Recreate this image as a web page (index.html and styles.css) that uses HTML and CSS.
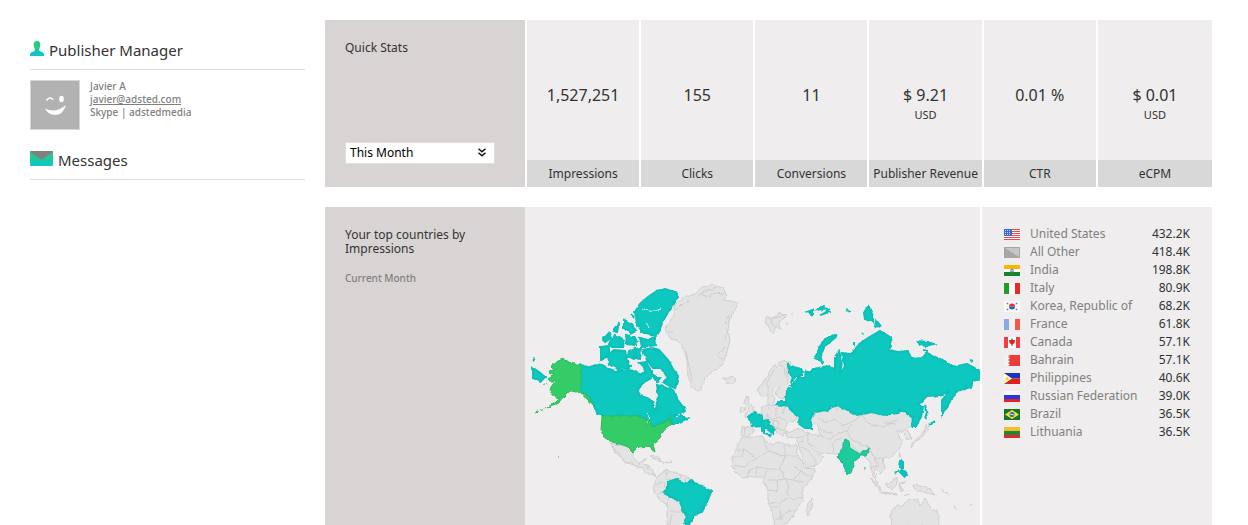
FILE: index.html
```html
<!DOCTYPE html>
<html lang="en">
<head>
<meta charset="utf-8">
<title>Publisher Dashboard</title>
<link rel="stylesheet" href="styles.css">
</head>
<body>
<div class="page">
  <aside class="sidebar">
    <h2 class="side-title">
      <svg class="icon-person" width="14" height="15" viewBox="0 0 14 15" aria-hidden="true">
        <defs><linearGradient id="brand" x1="0" y1="0" x2="0" y2="1"><stop offset="0" stop-color="#33cc66"/><stop offset="1" stop-color="#08c7cf"/></linearGradient></defs>
        <path fill="url(#brand)" d="M7 0C9.500 0 10.800 2 10.300 4.500C10 6.500 9.300 7.500 9 8.500C9 9.800 10 10.300 11.500 10.800C13.500 11.500 14 12.500 14 15H0C0 12.500 .5 11.500 2.500 10.800C4 10.300 5 9.800 5 8.500C4.700 7.500 4 6.500 3.700 4.500C3.200 2 4.500 0 7 0Z"/>
      </svg>
      <span>Publisher Manager</span>
    </h2>
    <div class="contact">
      <svg class="avatar" viewBox="0 0 50 50" role="img" aria-label="Avatar">
        <rect x=".5" y=".5" width="49" height="49" fill="#b2b2b2" stroke="#d8d4d4"/>
        <ellipse cx="31.500" cy="19" rx="2.300" ry="3.300" fill="#fff"/>
        <path d="M16.500 20.500Q20 16 23 19.800" fill="none" stroke="#fff" stroke-width="1.600"/>
        <path d="M15 28.500Q25 34 36 25Q33 35 25 35Q18 35 15 28.500Z" fill="#fff"/>
      </svg>
      <div class="contact-text">
        <div>Javier A</div>
        <div><a href="mailto:javier@adsted.com">javier@adsted.com</a></div>
        <div>Skype | adstedmedia</div>
      </div>
    </div>
    <h2 class="side-title">
      <svg class="icon-mail" width="23" height="15" viewBox="0 0 23 15" aria-hidden="true">
        <rect width="23" height="15" rx="1" fill="url(#brand)"/>
        <path d="M0 1L1 0H22L23 1L11.500 8.700Z" fill="#808080"/>
      </svg>
      <span>Messages</span>
    </h2>
  </aside>

  <main class="main">
    <section class="stats">
      <div class="stats-head">
        <label for="period">Quick Stats</label>
        <div class="select-wrap">
          <select id="period" class="period"><option>This Month</option></select>
          <svg class="chevrons" width="8" height="9" viewBox="0 0 8 9" aria-hidden="true"><path d="M.5 .8L4 3.800L7.500 .8M.5 4.800L4 7.800L7.500 4.800" fill="none" stroke="#111" stroke-width="1.500"/></svg>
        </div>
      </div>
      <div class="stat"><div class="value">1,527,251</div><div class="name">Impressions</div></div>
      <div class="stat"><div class="value">155</div><div class="name">Clicks</div></div>
      <div class="stat"><div class="value">11</div><div class="name">Conversions</div></div>
      <div class="stat"><div class="value">$ 9.21<small>USD</small></div><div class="name">Publisher Revenue</div></div>
      <div class="stat"><div class="value">0.01 %</div><div class="name">CTR</div></div>
      <div class="stat"><div class="value">$ 0.01<small>USD</small></div><div class="name">eCPM</div></div>
    </section>

    <section class="countries">
      <div class="countries-head">
        <div>Your top countries by Impressions</div>
        <div class="range">Current Month</div>
      </div>
      <svg class="map" viewBox="525 207 455 318" role="img" aria-label="World map of impressions">
        <defs>
          <filter id="coast" x="-5%" y="-5%" width="110%" height="110%" color-interpolation-filters="sRGB"><feTurbulence type="fractalNoise" baseFrequency=".2" numOctaves="1" seed="4"/><feDisplacementMap in="SourceGraphic" scale="4" xChannelSelector="R" yChannelSelector="G"/></filter>
        </defs>
        <g class="land" filter="url(#coast)">
          <path d="M693 295L702 287L713 285L723 288L727 296L723 300L731 301L738 303L735 310L730 317L728 330L730 340L727 352L723 363L715 370L705 378L700 392L693 388L688 377L687 360L682 343L670 338L665 328L673 317L675 305L683 298Z"/>
          <path d="M696 298L704 291L717 288M680 306L689 300M725 348L718 354M723 359L716 355M729 315L725 324M700 294L708 297L715 293L724 294M686 352L689 366L692 380M667 331L674 333M727 330L725 340M676 309L681 304"/>
          <path d="M723 377L727 379L731 376L736 379L733 383L727 384Z"/>
          <path d="M766 316L773 319L778 313L786 315L781 320L778 322L782 330L776 326L773 335L766 324ZM770 318L774 328M775 318L781 316M785 323L788 323M791 314L793 314"/>
          <path d="M760 395L758 388L765 380L772 367L783 360L790 363L787 366L788 380L787 395L783 399L775 394L779 386L776 382L772 393L775 399L772 407L768 406L768 394L764 397Z"/>
          <path d="M768 393L768 381L773 371L780 365L784 367L786 380"/>
          <path d="M745 416L748 408L744 402L747 396L750 402L754 410L754 415ZM740 412L741 407L745 407L744 412Z"/>
          <path d="M761 413L762 407L768 405L775 406L787 402L792 412L800 417L795 420L790 421L785 429L783 437L779 433L772 425L767 421L761 420Z"/>
          <path d="M768 407L767 415L773 419L780 418L787 421M776 406V416M761 417L768 419L779 422L777 429M785 406L783 414M773 420L774 427M784 430L776 428"/>
          <path d="M742 426L753 427L754 430L750 435L745 437L741 435ZM745 428L744 435"/>
          <path d="M785 432L800 429L808 433L808 437L797 438L787 437Z"/>
          <path d="M796 438L808 436L808 443L817 453L824 457L818 464L807 468L803 460Z"/>
          <path d="M800 446L808 450L817 463M797 443L803 440"/>
          <path d="M808 433L820 436L818 427L812 420L811 408L840 400L905 405L914 425L907 428L902 431L896 431L900 437L902 443L898 451L890 457L883 458L885 468L880 474L876 468L874 472L878 483L873 476L870 462L863 455L850 456L837 454L832 454L820 452L808 442Z"/>
          <path d="M818 418L827 423L834 419L844 425L854 421L862 415L868 423L883 428L898 419M820 436L830 439L840 433L847 431L852 424M840 400L836 410M820 429L833 434M833 453L832 443L841 438M847 431L852 440L859 443L870 448L874 459L881 458M874 459L879 466L872 467M849 443L860 453L869 449M884 423L896 424"/>
          <path d="M905 430L909 431L911 438L907 440L904 433M926 425L929 429L925 432L923 437L913 444L911 447L912 443L919 438L924 432ZM900 453L901 457L899 456Z"/>
          <path d="M742 438L753 437L763 436L765 441L773 445L778 442L787 445L796 445L798 455L805 468L815 469L812 478L803 488L803 498L797 510L790 520L782 526L775 526L772 512L768 502L768 490L763 482L763 477L755 477L742 478L737 472L732 467L732 457L737 447Z"/>
          <path d="M743 448L757 459L768 451L763 440M736 450H744L741 457H732M734 465L744 467L749 462L757 459M768 451L785 457V444M785 456H798M785 457L780 469L769 469L757 467L749 470L748 476M757 467V476M769 469L763 478M780 469L785 479L777 480L768 480M785 479L793 480L801 472L795 466M793 480L803 482M801 472L811 477M777 480L778 491L768 490M788 480L787 494L793 500L802 497M768 502L780 503L788 498M780 503V518L789 510L796 511M772 507H778M776 519H783"/>
          <path d="M813 498L812 507L808 516L806 510L808 503Z"/>
          <path d="M610 443L618 445L628 447L633 452L633 458L640 463L646 458L643 464L650 466L653 474L659 477L650 475L640 467L625 462L618 452ZM612 446L620 457L615 453Z"/>
          <path d="M650 457L657 456L663 461L654 459ZM663 462L672 461L668 463ZM640 463L637 468M645 464L649 470"/>
          <path d="M652 473L658 476L665 470L672 472L682 475L692 480L688 500L690 526H667L667 505L658 498L653 488L657 478Z"/>
          <path d="M667 472L666 479L675 480M655 486L663 482L668 489L659 494M667 505L668 495M670 511H684M672 514L669 526M680 475L679 482M686 477L685 482"/>
          <path d="M870 478L877 484L882 491L878 489ZM882 492L898 494L896 495L882 493ZM885 484L892 482L896 477L897 484L893 489L887 487ZM899 483L906 482L901 485L904 491L900 490ZM912 485L920 486L930 489L935 495L928 493L919 491L914 488ZM904 496L910 494M941 489L949 495M954 505L957 511M969 506L974 503"/>
          <path d="M890 512L897 506L903 505L907 500L912 499L918 500L920 506L925 498L930 507L938 513L939 526H892Z"/>
        </g>
        <g class="teal" filter="url(#coast)">
          <path d="M581 364L587 368L593 366L598 364L604 366L609 369L615 371L622 371L628 370L633 371L641 375L645 372L644 366L647 364L650 369L652 374L655 376L648 380L640 385L638 391L640 396L647 398L652 401L655 410L658 407L656 402L659 396L657 385L661 386L666 389L670 388L675 392L677 399L683 407L685 411L680 415L670 416L675 417L681 416L688 418L684 420L672 425L670 418L665 422L653 427L648 420L640 416H602L597 412L594 406L588 396L581 391Z"/>
          <path d="M635 312L640 304L648 297L657 291L665 289L675 292L678 297L672 307L668 313L662 322L660 330L657 335L650 334L642 332L637 323Z"/>
          <path d="M640 338L648 340L655 336L656 345L642 347Z"/>
          <path d="M624 320L632 324L636 331L630 333L624 328ZM603 340L609 333L611 338L605 342ZM613 330L619 324L617 331ZM609 344L615 335L624 341L623 347L612 347ZM626 335L634 337L636 345L627 344ZM631 314L633 318M635 338L638 342M640 333L646 333"/>
          <path d="M601 347L609 346L609 356L601 359ZM608 355L614 350L625 351L627 360L629 368L619 369L609 364ZM629 351L635 349L634 359L628 356ZM636 349L641 348L640 359L636 358ZM626 365L632 366"/>
          <path d="M643 350L651 348L659 350L668 360L673 369L678 376L675 388L668 385L663 382L668 378L661 368L653 368L647 360ZM640 363L646 362L644 367ZM654 378L660 378L657 382Z"/>
          <path d="M533 368L539 372L545 377L541 381L533 378ZM533 359L535 360"/>
          <path d="M788 365L800 369L803 373L797 377L805 377L806 371L810 373L813 369L830 366L835 370L835 357L839 351L842 362L840 373L845 367L843 353L849 354L855 350L858 345L868 338L880 331L890 337L891 345L888 350L898 352L908 351L911 358L923 357L927 353L935 357L947 362L952 367L967 364L982 372V381L972 380L970 387L957 392L952 398L948 405L942 414L942 402L948 392L940 395L927 396L918 405L923 407L921 417L915 427L912 427L913 418L905 412L900 409L898 413L883 415L872 412L857 415L850 411L837 405L827 410L815 412L810 418L812 428L805 428L798 423L800 418L792 412L786 403L787 390L793 384Z"/>
          <path d="M835 335L823 340L819 349L815 358L822 362L820 354L826 345L836 337ZM868 306L873 316L873 322L865 319L864 313ZM876 320L880 325L875 327ZM807 312L813 310L813 315ZM815 311L824 306L829 312L820 315L830 309M918 341L927 342L934 344L927 346L920 345ZM923 350L928 351M970 360L973 361M925 405L927 420L926 411ZM929 425L935 421M854 342V346M862 333L863 335M846 310L850 312"/>
          <path d="M747 417L756 412L762 417L762 426L752 427L751 421Z"/>
          <path d="M761 421L768 420L769 425L775 430L773 434L771 431L765 427L761 424ZM767 434L771 435L770 437ZM762 428L764 428L764 433L762 432Z"/>
          <path d="M776 405L779 402L784 402L785 405L780 406Z"/>
          <path d="M668 482L677 479L681 483L688 482L691 480L694 484L705 487L711 492L707 502L702 512L695 514L688 526L684 522L687 517L683 510L680 502L668 495L663 493L668 488Z"/>
          <path d="M900 461L903 462L903 469L899 466ZM903 470L907 475L905 477L901 473ZM899 470L895 474"/>
        </g>
        <g class="inlets" filter="url(#coast)">
          <path d="M642 308Q650 314 661 309M785 386L791 388M797 377L793 382M646 323L650 328"/>
          <path d="M646 414L650 417L649 420M675 418L680 414"/>
        </g>
        <g class="green" filter="url(#coast)">
          <path d="M581 364L575 364L568 362L563 359L558 361L551 367L554 370L549 371L550 374L554 375L548 379L550 381L555 381L551 387L550 391L553 396L559 398L556 401L547 408L560 402L566 395L570 391L576 392L581 391L585 393L590 399L594 407L588 400L581 392Z"/>
          <path d="M546 407L540 410M538 411L535 412M544 384L547 385M558 457L559 457M562 459L564 461"/>
          <path d="M602 416H638L647 420L646 427L650 419L653 427L665 422L670 418L671 425L662 432L660 438L653 444L655 452L652 450L650 446L638 447L633 452L628 447L623 445L612 442L605 438L601 430Z"/>
        </g>
        <path class="india" filter="url(#coast)" d="M845 439L849 441L850 448L860 454L870 447L866 456L861 456L854 462L851 473L847 474L842 462L837 457L841 450ZM865 467V470"/>
      </svg>
      <div class="ranking">
        <table class="country-table">
          <tbody>
          <tr><td class="flag"><svg viewBox="0 0 16 11"><path fill="#fff" d="M0 0H16V11H0Z"/><path stroke="#f04848" d="M0 .5H16M0 2.500H16M0 4.500H16M0 6.500H16M0 8.500H16M0 10.500H16"/><path fill="#3868cc" d="M0 0H8V7H0Z"/><path stroke="#c9dcff" stroke-dasharray="1 1" d="M1 1.500H7M1 3.500H7M1 5.500H7"/></svg></td><td>United States</td><td class="num">432.2K</td></tr>
          <tr><td class="flag"><svg viewBox="0 0 16 11"><path fill="#a6a6a6" d="M0 0H16V11H0Z"/><path fill="#c6c6c6" d="M1 1H15V10Z"/></svg></td><td>All Other</td><td class="num">418.4K</td></tr>
          <tr><td class="flag"><svg viewBox="0 0 16 11"><path fill="#f4b900" d="M0 0H16V4H0Z"/><path fill="#fff" d="M0 4H16V7H0Z"/><path fill="#16852a" d="M0 7H16V11H0Z"/><circle cx="8" cy="5.500" r="1.500" fill="#b5c5df" stroke="#7188b5"/></svg></td><td>India</td><td class="num">198.8K</td></tr>
          <tr><td class="flag"><svg viewBox="0 0 16 11"><path fill="#219b2c" d="M0 0H5V11H0Z"/><path fill="#f8f8f8" d="M5 0H11V11H5Z"/><path fill="#e72b2b" d="M11 0H16V11H11Z"/></svg></td><td>Italy</td><td class="num">80.9K</td></tr>
          <tr><td class="flag"><svg viewBox="0 0 16 11"><path fill="#f8f8f8" d="M0 0H16V11H0Z"/><path fill="#e43333" d="M5 5.500A3 3 0 0 1 11 5.500Z"/><path fill="#2764c0" d="M5 5.500A3 3 0 0 0 11 5.500Z"/><path stroke="#777" stroke-width="1.500" d="M3 3L4 2M12 2L13 3M3 8L4 9M12 9L13 8"/></svg></td><td>Korea, Republic of</td><td class="num">68.2K</td></tr>
          <tr><td class="flag"><svg viewBox="0 0 16 11"><path fill="#8da9e3" d="M0 0H5V11H0Z"/><path fill="#f1f1f1" d="M5 0H11V11H5Z"/><path fill="#ed5a4b" d="M11 0H16V11H11Z"/></svg></td><td>France</td><td class="num">61.8K</td></tr>
          <tr><td class="flag"><svg viewBox="0 0 16 11"><path fill="#ee4040" d="M0 0H16V11H0Z"/><path fill="#fff" d="M4 0H12V11H4Z"/><path fill="#e32222" d="M8 1L9 3L11 3L10.500 6L8.500 7.500V9H7.500V7.500L5.500 6L5 3L7 3Z"/></svg></td><td>Canada</td><td class="num">57.1K</td></tr>
          <tr><td class="flag"><svg viewBox="0 0 16 11"><path fill="#ec3b3b" d="M0 0H16V11H0Z"/><path fill="#f7f2f2" d="M0 0H4L6 1L4 2L6 3.500L4 5L6 6.500L4 8L6 9.500L4 11H0Z"/></svg></td><td>Bahrain</td><td class="num">57.1K</td></tr>
          <tr><td class="flag"><svg viewBox="0 0 16 11"><path fill="#1a34bd" d="M0 0H16V5.500H0Z"/><path fill="#df2020" d="M0 5.500H16V11H0Z"/><path fill="#fff8d5" d="M0 0L8 5.500L0 11Z"/><circle cx="3" cy="5.500" r="1.500" fill="#f4d426"/></svg></td><td>Philippines</td><td class="num">40.6K</td></tr>
          <tr><td class="flag"><svg viewBox="0 0 16 11"><path fill="#fafafa" d="M0 0H16V4H0Z"/><path fill="#2739e0" d="M0 4H16V8H0Z"/><path fill="#e42323" d="M0 8H16V11H0Z"/></svg></td><td>Russian Federation</td><td class="num">39.0K</td></tr>
          <tr><td class="flag"><svg viewBox="0 0 16 11"><path fill="#16762a" d="M0 0H16V11H0Z"/><path fill="#f1e62d" d="M8 1L15 5.500L8 10L1 5.500Z"/><circle cx="8" cy="5.500" r="2.500" fill="#3561be"/><path stroke="#d5e3fa" d="M6 5L10 6"/></svg></td><td>Brazil</td><td class="num">36.5K</td></tr>
          <tr><td class="flag"><svg viewBox="0 0 16 11"><path fill="#f1bf22" d="M0 0H16V4H0Z"/><path fill="#238636" d="M0 4H16V8H0Z"/><path fill="#e52929" d="M0 8H16V11H0Z"/></svg></td><td>Lithuania</td><td class="num">36.5K</td></tr>
          </tbody>
        </table>
      </div>
    </section>
  </main>
</div>
</body>
</html>
```
FILE: styles.css
```css
* { box-sizing: border-box; }
body {
  margin: 0;
  background: #fff;
  color: #333;
  font: 12px/14px "Noto Sans", Tahoma, sans-serif;
}
.page {
  display: grid;
  grid-template-columns: 275px 1fr;
  gap: 20px;
  padding: 20px 36px 0 30px;
}
.side-title {
  display: flex;
  align-items: center;
  gap: 5px;
  height: 50px;
  margin: 0;
  padding-top: 10px;
  border-bottom: 1px solid #ddd;
  font-size: 15px;
  font-weight: 400;
  line-height: 20px;
}
.icon-person, .icon-mail { margin-bottom: 3px; }
.contact {
  display: flex;
  gap: 10px;
  padding-top: 10px;
  color: #808080;
  font-size: 10px;
  font-weight: 500;
  line-height: 13px;
}
.contact a { color: inherit; }
.avatar { width: 50px; height: 50px; }
.stats {
  display: grid;
  grid-template-columns: 200px repeat(5, 112fr) 114fr;
  gap: 2px;
  min-height: 167px;
  margin-bottom: 20px;
}
.stats-head {
  display: flex;
  flex-direction: column;
  justify-content: space-between;
  padding: 21px 30px 23px 20px;
  background: #d8d4d3;
}
.select-wrap { position: relative; }
.period {
  display: block;
  width: 100%;
  height: 22px;
  padding: 0 4px;
  border: 1px solid #e2dede;
  border-radius: 0;
  appearance: none;
  background: #fff;
  color: #000;
  font: inherit;
}
.chevrons { position: absolute; right: 9px; top: 6px; pointer-events: none; }
.stat { display: flex; flex-direction: column; background: #efeded; text-align: center; }
.value { flex: 1; padding-top: 65px; font-size: 16px; line-height: 20px; }
.value small { display: block; font-size: 11px; }
.name { background: #d8d8d8; line-height: 27px; white-space: nowrap; }
.countries { display: grid; grid-template-columns: 200px 1fr 232px; background: #efeded; }
.countries-head { padding: 21px 20px; background: #d8d4d3; }
.range { margin-top: 15px; color: #808080; font-size: 10px; font-weight: 500; }
.map { display: block; width: 100%; }
.land path { fill: #e4e3e3; stroke: #cfcece; }
.teal path { fill: #0dc8bf; stroke: #0cbfb7; stroke-width: 2; }
.inlets path { fill: none; stroke: #efeded; }
.green path { fill: #33cc66; stroke: #2dbb5c; }
.india { fill: #1ecb9c; stroke: #1ab98e; }
.ranking { padding: 18px 22px; border-left: 2px solid #fff; }
.country-table { width: 100%; border-collapse: collapse; color: #808080; }
.country-table td { height: 18px; padding: 0; white-space: nowrap; }
.country-table .flag { width: 26px; }
.flag svg { display: block; width: 16px; height: 11px; }
.country-table .num { color: #333; text-align: right; }
```
